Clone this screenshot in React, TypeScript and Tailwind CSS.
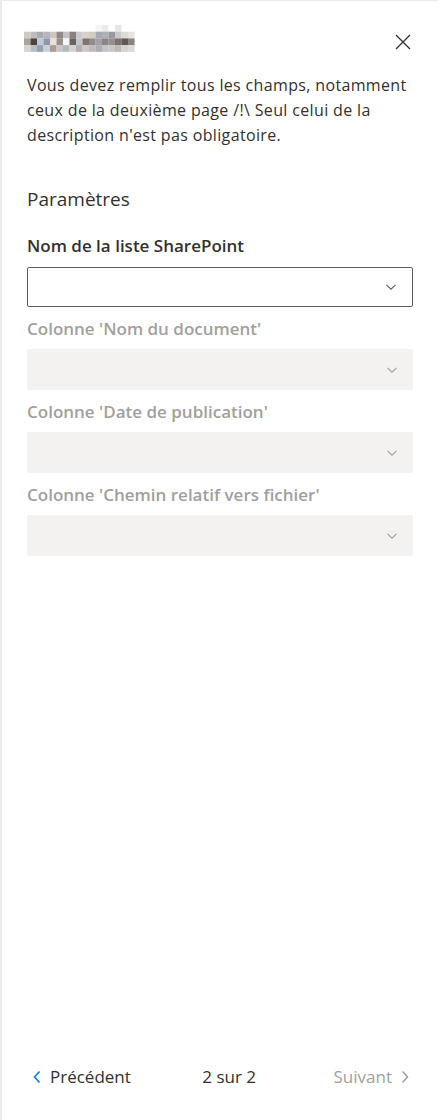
import React from "react";

const mosaic: string[][] = [
  ["#ffffff","#ffffff","#ffffff","#ffffff","#ffffff","#ffffff","#ffffff","#ffffff","#ffffff","#ffffff","#ffffff","#f4f4f7","#e9e9ee","#ffffff","#e4e4ea","#ffffff","#ffffff"],
  ["#cfcac5","#bdbdc1","#a9a9ae","#b6b7bc","#cdc7c0","#8f8a86","#c3c3c7","#86827f","#c9c9ce","#d8d2ca","#d0cbc4","#a2aab6","#b0b0b5","#959aa3","#c9c9ce","#dedad5","#e6e3e0"],
  ["#a9a49f","#4f433d","#bccadb","#8e98a6","#ebe0d4","#98918a","#f6f6f8","#67645f","#c4c4c9","#7d756e","#908d8b","#a2a2a8","#898684","#929090","#7a726f","#5e5856","#8a8582"],
  ["#d9d4d0","#b9bdc3","#98a2ae","#cbd0d7","#ab9d92","#c3c8cf","#b4b9c0","#d6d1cc","#b1b1b5","#cdc8c3","#bcbcc0","#aaaeb5","#c3c3c7","#cbc6c1","#bcb9b6","#d2d2d2","#dcd9d6"],
];

function Chevron() {
  return (
    <svg width="14" height="14" viewBox="0 0 14 14" className="shrink-0">
      <path d="M2.5 4.8 L7 9.2 L11.5 4.8" fill="none" stroke="currentColor" strokeWidth="1.1" />
    </svg>
  );
}

function Field({ label, enabled }: { label: string; enabled?: boolean }) {
  return (
    <div className="flex flex-col">
      <div
        className={
          enabled
            ? "text-[17px] leading-[24px] font-semibold text-[#323130] pb-[9px]"
            : "text-[17px] leading-[24px] font-semibold text-[#a19f9d] pb-[8px]"
        }
      >
        {label}
      </div>
      {enabled ? (
        <div className="h-[40px] rounded-[2px] border border-[#605e5c] bg-white flex items-center justify-end pr-[14px] text-[#605e5c]">
          <Chevron />
        </div>
      ) : (
        <div className="h-[41px] rounded-[2px] bg-[#f3f2f1] flex items-center justify-end pr-[14px] text-[#a19f9d]">
          <Chevron />
        </div>
      )}
    </div>
  );
}

export default function App() {
  return (
    <div
      className="w-[438px] h-[1120px] bg-white border-l-2 border-t border-[#eaeaea] flex flex-col text-[#323130]"
      style={{ fontFamily: '"Open Sans", "Noto Sans", Arial, sans-serif' }}
    >
      <div className="flex items-start justify-between pl-[22px] pr-[26px] pt-[24px]">
        <svg width="111" height="27" viewBox="0 0 111 27" className="block">
          {mosaic.map((row, r) =>
            row.map((c, i) => (
              <rect key={`${r}-${i}`} x={i * 6.5} y={r * 6.7} width="6.6" height="6.8" fill={c} />
            ))
          )}
        </svg>
        <svg width="18" height="18" viewBox="0 0 18 18" className="mt-[8px]">
          <path d="M2 2 L16 16 M16 2 L2 16" stroke="#323130" strokeWidth="1.3" fill="none" />
        </svg>
      </div>

      <div className="px-[25px] pt-[21px] text-[16px] leading-[25px] tracking-[0.35px] text-[#323130]">
        Vous devez remplir tous les champs, notamment ceux de la deuxième page /!\ Seul celui de la description n'est pas obligatoire.
      </div>

      <div className="px-[25px] pt-[38px] text-[19px] leading-[26px] text-[#323130]">Paramètres</div>

      <div className="px-[25px] pt-[22px] flex flex-col gap-[10px]">
        <Field label="Nom de la liste SharePoint" enabled />
        <Field label="Colonne 'Nom du document'" />
        <Field label="Colonne 'Date de publication'" />
        <Field label="Colonne 'Chemin relatif vers fichier'" />
      </div>

      <div className="flex-1" />

      <div className="flex items-center justify-between pl-[30px] pr-[28px] pb-[31px] text-[17px] leading-[24px]">
        <div className="flex items-center gap-[8px] text-[#323130]">
          <svg width="10" height="16" viewBox="0 0 10 16" className="text-[#0078d4]">
            <path d="M7.5 2.5 L2.5 8 L7.5 13.5" fill="none" stroke="currentColor" strokeWidth="1.5" />
          </svg>
          <span>Précédent</span>
        </div>
        <div className="text-[#323130] pr-[6px]">2 sur 2</div>
        <div className="flex items-center gap-[8px] text-[#a19f9d]">
          <span>Suivant</span>
          <svg width="10" height="16" viewBox="0 0 10 16">
            <path d="M2.5 2.5 L7.5 8 L2.5 13.5" fill="none" stroke="currentColor" strokeWidth="1.5" />
          </svg>
        </div>
      </div>
    </div>
  );
}
